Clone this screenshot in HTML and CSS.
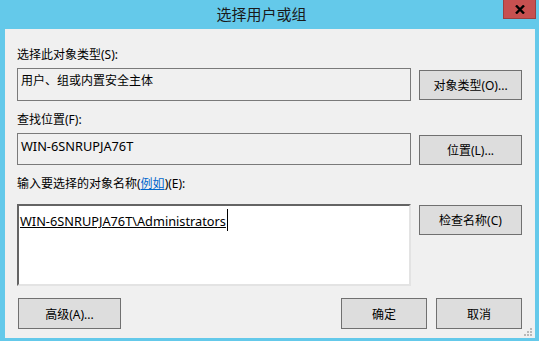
FILE: index.html
```html
<!DOCTYPE html>
<html lang="zh-CN">
  <head>
    <meta charset="utf-8" />
    <meta name="viewport" content="width=device-width, initial-scale=1.0" />
    <title>选择用户或组</title>
    <link rel="stylesheet" href="styles.css">
  </head>
  <body>
    <div class="window">
      <header class="titlebar">
        <div class="title">选择用户或组</div>
        <div class="close">
          <svg width="10" height="9" viewBox="0 0 10 9">
            <path d="M1 0.5 L9 8.5 M9 0.5 L1 8.5" stroke="#000" stroke-width="2.4" />
          </svg>
        </div>
      </header>

      <main class="panel">
        <div class="label first">选择此对象类型(S):</div>
        <div class="row">
          <div class="field">用户、组或内置安全主体</div>
          <button class="btn btn-side">对象类型(O)...</button>
        </div>

        <div class="label">查找位置(F):</div>
        <div class="row">
          <div class="field field-short latin">WIN-6SNRUPJA76T</div>
          <button class="btn btn-side">位置(L)...</button>
        </div>

        <div class="label">输入要选择的对象名称(<a href="#" class="link">例如</a>)(E):</div>
        <div class="row">
          <div class="names latin"><span class="entered">WIN-6SNRUPJA76T\Administrators</span><span class="caret"></span></div>
          <button class="btn btn-check">检查名称(C)</button>
        </div>

        <div class="actions">
          <button class="btn btn-wide">高级(A)...</button>
          <div class="spacer"></div>
          <button class="btn btn-ok">确定</button>
          <button class="btn btn-ok">取消</button>
        </div>

        <svg class="grip" width="8" height="8" viewBox="0 0 8 8">
          <rect x="6" y="0" width="2" height="2" fill="#b8b8b8" />
          <rect x="3" y="3" width="2" height="2" fill="#b8b8b8" />
          <rect x="6" y="3" width="2" height="2" fill="#b8b8b8" />
          <rect x="0" y="6" width="2" height="2" fill="#b8b8b8" />
          <rect x="3" y="6" width="2" height="2" fill="#b8b8b8" />
          <rect x="6" y="6" width="2" height="2" fill="#b8b8b8" />
        </svg>
      </main>
    </div>
  </body>
</html>
```

FILE: styles.css
```css
body {
  margin: 0;
  font-family: "Noto Sans", "Noto Sans CJK SC", sans-serif;
  font-size: 12px;
  color: #000;
  background-color: #64c9ea;
}

.window {
  width: 539px;
  height: 341px;
  display: flex;
  flex-direction: column;
  background-color: #64c9ea;
}

.titlebar {
  height: 29px;
  display: flex;
  flex-shrink: 0;
}

.title {
  flex: 1;
  padding-left: 20px;
  text-align: center;
  font-size: 15px;
  line-height: 28px;
  color: #1a1a1a;
}

.close {
  width: 33px;
  height: 19px;
  margin-right: 3px;
  box-sizing: border-box;
  background-color: #c75050;
  border: 1px solid #9c4040;
  border-top: none;
  display: flex;
  align-items: center;
  justify-content: center;
}

.panel {
  position: relative;
  flex: 1;
  margin: 0 4px 3px 5px;
  padding: 18px 13px 0 12px;
  background-color: #f0f0f0;
}

.label {
  line-height: 16px;
  margin: 11px 0 5px;
}

.label.first {
  margin-top: 0;
}

.row {
  display: grid;
  grid-template-columns: 394px 103px;
  column-gap: 8px;
  align-items: start;
}

.field {
  height: 33px;
  box-sizing: border-box;
  border: 1px solid #7a7a7a;
  padding: 4px 3px;
  line-height: 16px;
  background-color: #f0f0f0;
}

.field-short {
  height: 32px;
}

/* latin text in the dialog font runs a bit wider than Noto Sans at 12px */
.latin {
  font-size: 12.75px;
}

.link {
  color: #0066cc;
  text-decoration: underline;
}

.names {
  height: 82px;
  box-sizing: border-box;
  border: 2px solid #e3e3e3;
  border-top-color: #646464;
  border-left-color: #646464;
  background-color: #fff;
  padding: 3px 1px;
  line-height: 16px;
  margin-top: 7px;
}

.entered {
  text-decoration: underline;
}

.caret {
  display: inline-block;
  width: 1px;
  height: 22px;
  margin-left: 1px;
  vertical-align: -5px;
  background-color: #000;
}

.btn {
  box-sizing: border-box;
  height: 30px;
  padding: 0;
  border: 1px solid #707070;
  background-color: #dddddd;
  font-family: inherit;
  font-size: 12px;
  color: #000;
}

.btn-side {
  margin-top: 2px;
}

.btn-check {
  margin-top: 8px;
}

.actions {
  display: flex;
  gap: 9px;
  margin-top: 12px;
}

.btn-wide {
  width: 103px;
  height: 31px;
  margin-left: 1px;
}

.btn-ok {
  width: 86px;
  height: 31px;
}

.spacer {
  flex: 1;
}

.grip {
  position: absolute;
  right: 3px;
  bottom: 2px;
}
```
